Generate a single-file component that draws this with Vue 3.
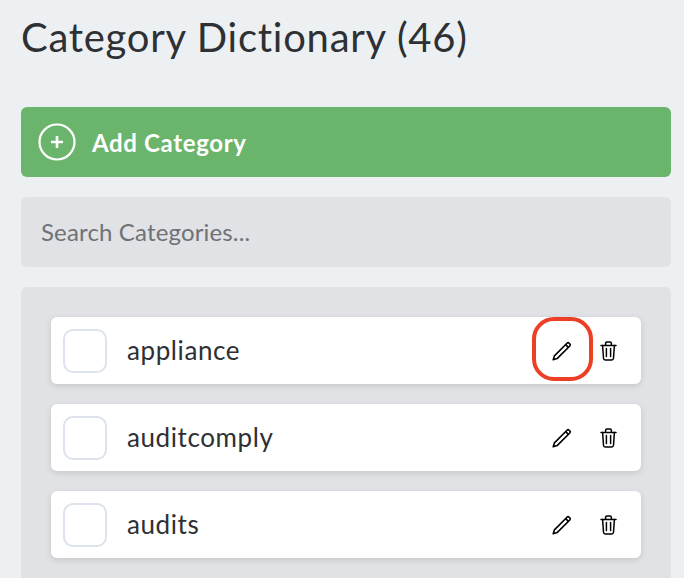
<script setup>
const items = ['appliance', 'auditcomply', 'audits']
</script>

<template>
  <div class="page">
    <h1 class="title">Category Dictionary (46)</h1>
    <button class="add">
      <svg class="plus" width="38" height="38" viewBox="0 0 38 38" fill="none" stroke="#fff">
        <circle cx="19" cy="19" r="17.5" stroke-width="2.2" />
        <path d="M19 13v12M13 19h12" stroke-width="2.6" />
      </svg>
      <span>Add Category</span>
    </button>
    <div class="search">Search Categories...</div>
    <div class="panel">
      <div v-for="(item, i) in items" :key="item" class="row">
        <span class="check"></span>
        <span class="name">{{ item }}</span>
        <span class="actions">
          <span class="icon-wrap" :class="{ marked: i === 0 }">
            <svg width="20" height="20" viewBox="0 0 20 20" fill="none" stroke="#000" stroke-width="1.6" stroke-linejoin="round">
              <path d="M1.2 18.8l1.2-3.9L15 2.2a1.5 1.5 0 0 1 2.1 0l.7.7a1.5 1.5 0 0 1 0 2.1L5.1 17.6z" />
              <path d="M13.6 3.6l2.8 2.8" />
            </svg>
          </span>
          <svg class="trash" width="17" height="20" viewBox="0 0 17 20" fill="none" stroke="#000" stroke-width="1.5" stroke-linejoin="round" stroke-linecap="round">
            <path d="M1 4.4h15M5.6 4V2.4C5.6 1.6 6.2 1 7 1h3c.8 0 1.4.6 1.4 1.4V4" />
            <path d="M2.6 4.4l.9 12.8c.1 1 .7 1.8 1.7 1.8h6.6c1 0 1.6-.8 1.7-1.8l.9-12.8" />
            <path d="M6.4 7.5v8M10.6 7.5v8" />
          </svg>
        </span>
      </div>
    </div>
  </div>
</template>

<style>
html, body { margin: 0; background: #ecf0f3; overflow: hidden; }
</style>

<style scoped>
.page {
  width: 684px;
  height: 578px;
  overflow: hidden;
  box-sizing: border-box;
  padding: 11px 13px 0 21px;
  font-family: Lato, sans-serif;
  background: #ecf0f3;
}
.title {
  margin: 0 0 44px;
  font-size: 40px;
  line-height: 52px;
  font-weight: 400;
  letter-spacing: 0.73px;
  color: #2e3034;
}
.add {
  display: flex;
  align-items: center;
  gap: 16px;
  width: 100%;
  height: 70px;
  padding: 0 0 0 17px;
  border: 0;
  border-radius: 6px;
  background: #6ab56b;
  color: #fff;
  font: 700 24px Lato, sans-serif;
  letter-spacing: 0.65px;
}
.search {
  display: flex;
  align-items: center;
  box-sizing: border-box;
  height: 70px;
  margin-top: 20px;
  padding: 0 0 2px 20px;
  border-radius: 6px;
  background: #e0e2e5;
  color: #707176;
  font-size: 24px;
  letter-spacing: 0.15px;
}
.panel {
  margin-top: 20px;
  padding: 30px 30px 0 30px;
  height: 400px;
  border-radius: 6px;
  background: #e0e2e5;
}
.row {
  display: flex;
  align-items: center;
  height: 67px;
  margin-bottom: 20px;
  padding: 0 24px 0 12px;
  border-radius: 6px;
  background: #fff;
  box-shadow: 0 2px 6px rgba(0, 0, 0, 0.12);
}
.check {
  box-sizing: border-box;
  width: 44px;
  height: 44px;
  border: 2px solid #dde3ec;
  border-radius: 10px;
}
.name {
  margin-left: 20px;
  padding-bottom: 1px;
  font-size: 26px;
  letter-spacing: 0.6px;
  color: #2e3034;
}
.actions {
  display: flex;
  align-items: center;
  gap: 28px;
  margin-left: auto;
}
.icon-wrap {
  position: relative;
  display: flex;
}
.marked::after {
  content: "";
  position: absolute;
  left: -20px;
  top: -24px;
  box-sizing: border-box;
  width: 61px;
  height: 64px;
  border: 4px solid #ec3f26;
  border-radius: 22px;
}
</style>
